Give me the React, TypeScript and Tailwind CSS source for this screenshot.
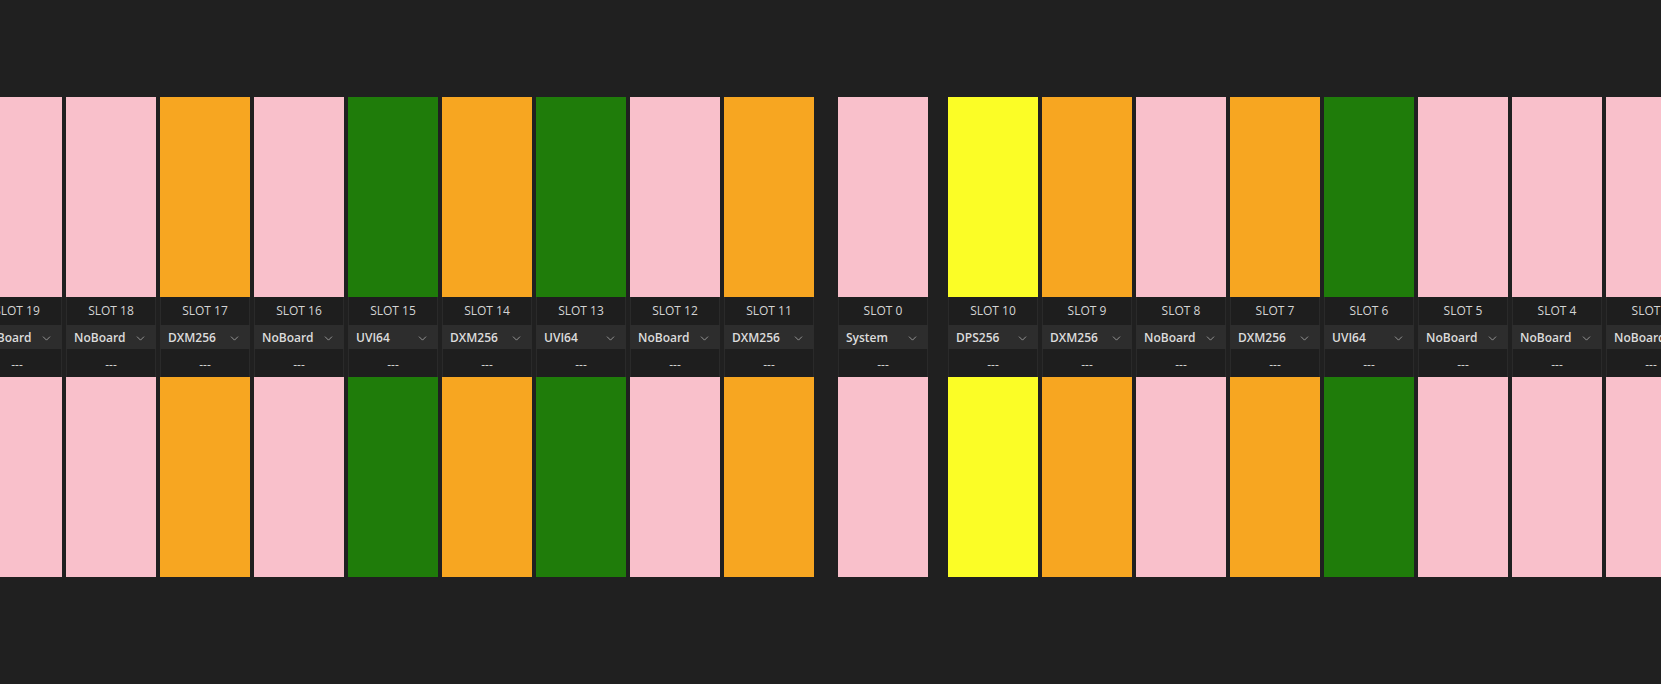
import { ChevronDown } from "lucide-react";

type Slot = { id: number; board: string };

const colors: Record<string, string> = {
  NoBoard: "bg-[#f9c0cb]",
  System: "bg-[#f9c0cb]",
  DXM256: "bg-[#f7a621]",
  UVI64: "bg-[#1f7c0a]",
  DPS256: "bg-[#fbfd26]",
};

const left: Slot[] = [
  { id: 19, board: "NoBoard" },
  { id: 18, board: "NoBoard" },
  { id: 17, board: "DXM256" },
  { id: 16, board: "NoBoard" },
  { id: 15, board: "UVI64" },
  { id: 14, board: "DXM256" },
  { id: 13, board: "UVI64" },
  { id: 12, board: "NoBoard" },
  { id: 11, board: "DXM256" },
];

const right: Slot[] = [
  { id: 10, board: "DPS256" },
  { id: 9, board: "DXM256" },
  { id: 8, board: "NoBoard" },
  { id: 7, board: "DXM256" },
  { id: 6, board: "UVI64" },
  { id: 5, board: "NoBoard" },
  { id: 4, board: "NoBoard" },
  { id: 3, board: "NoBoard" },
];

function SlotColumn({ slot }: { slot: Slot }) {
  const color = colors[slot.board];
  return (
    <div className="flex w-[90px] shrink-0 flex-col">
      <div className={`h-[200px] ${color}`} />
      <div className="flex h-[28px] items-center justify-center border-x border-[#2a2a2a] bg-[#1e1e1e] text-[12px] text-[#d4d4d4]">
        SLOT {slot.id}
      </div>
      <div className="flex h-[24px] items-center justify-between bg-[#2d2d2d] pl-2 pr-[9px] pt-[2px]">
        <span className="text-[12px] font-semibold text-[#dcdcdc]">{slot.board}</span>
        <ChevronDown size={13} strokeWidth={1.3} className="text-[#bdbdbd]" />
      </div>
      <div className="flex h-[28px] items-center justify-center border-x border-[#2a2a2a] bg-[#1e1e1e] pt-[3px] text-[12px] text-[#d4d4d4]">
        ---
      </div>
      <div className={`h-[200px] ${color}`} />
    </div>
  );
}

export default function App() {
  return (
    <div
      className="h-[684px] w-full overflow-hidden bg-[#202020] pt-[97px]"
      style={{ fontFamily: '"Open Sans", "Noto Sans", sans-serif' }}
    >
      <div className="ml-[-28px] flex">
        <div className="flex gap-1">
          {left.map((s) => (
            <SlotColumn key={s.id} slot={s} />
          ))}
        </div>
        <div className="ml-6">
          <SlotColumn slot={{ id: 0, board: "System" }} />
        </div>
        <div className="ml-5 flex gap-1">
          {right.map((s) => (
            <SlotColumn key={s.id} slot={s} />
          ))}
        </div>
      </div>
    </div>
  );
}
